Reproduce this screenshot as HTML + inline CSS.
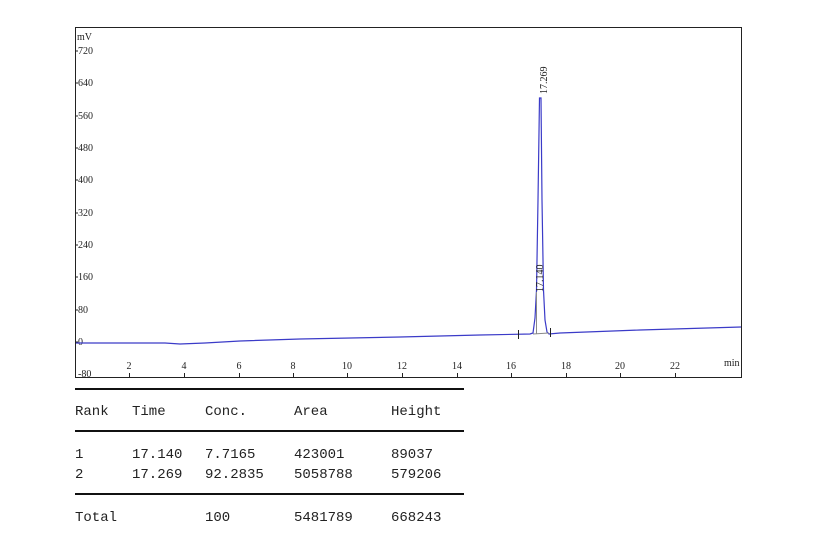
<!DOCTYPE html>
<html><head><meta charset="utf-8"><style>
html,body{margin:0;padding:0;background:#fff;width:823px;height:535px;overflow:hidden}
svg{display:block}
.t{font-family:"Liberation Serif",serif;font-size:10px;fill:#222}
.m{font-family:"Liberation Mono","Noto Sans CJK SC",monospace;font-size:14px;fill:#222}
</style></head><body>
<svg width="823" height="535" xmlns="http://www.w3.org/2000/svg">
<rect x="75.5" y="27.5" width="666" height="350" fill="none" stroke="#222" stroke-width="1"/>
<text class="t" x="77" y="40">mV</text>
<g class="t">
<text x="78" y="54">720</text><text x="78" y="86">640</text><text x="78" y="119">560</text>
<text x="78" y="151">480</text><text x="78" y="183">400</text><text x="78" y="216">320</text>
<text x="78" y="248">240</text><text x="78" y="280">160</text><text x="78" y="313">80</text>
<text x="78" y="345">0</text><text x="78" y="377">-80</text>
</g>
<g stroke="#222" stroke-width="1">
<line x1="75" y1="51" x2="78" y2="51"/><line x1="75" y1="83" x2="78" y2="83"/><line x1="75" y1="116" x2="78" y2="116"/>
<line x1="75" y1="148" x2="78" y2="148"/><line x1="75" y1="180" x2="78" y2="180"/><line x1="75" y1="213" x2="78" y2="213"/>
<line x1="75" y1="245" x2="78" y2="245"/><line x1="75" y1="277" x2="78" y2="277"/><line x1="75" y1="310" x2="78" y2="310"/>
<line x1="75" y1="342" x2="78" y2="342"/>
<line x1="129.5" y1="373" x2="129.5" y2="377"/><line x1="184.5" y1="373" x2="184.5" y2="377"/><line x1="239.5" y1="373" x2="239.5" y2="377"/>
<line x1="293.5" y1="373" x2="293.5" y2="377"/><line x1="347.5" y1="373" x2="347.5" y2="377"/><line x1="402.5" y1="373" x2="402.5" y2="377"/>
<line x1="457.5" y1="373" x2="457.5" y2="377"/><line x1="511.5" y1="373" x2="511.5" y2="377"/><line x1="566.5" y1="373" x2="566.5" y2="377"/>
<line x1="620.5" y1="373" x2="620.5" y2="377"/><line x1="675.5" y1="373" x2="675.5" y2="377"/>
</g>
<g class="t" text-anchor="middle">
<text x="129" y="369">2</text><text x="184" y="369">4</text><text x="239" y="369">6</text><text x="293" y="369">8</text>
<text x="347" y="369">10</text><text x="402" y="369">12</text><text x="457" y="369">14</text><text x="511" y="369">16</text>
<text x="566" y="369">18</text><text x="620" y="369">20</text><text x="675" y="369">22</text>
</g>
<text class="t" x="724" y="366">min</text>
<polyline fill="none" stroke="#3b3bc8" stroke-width="1.2" points="76,343 165,343 180,344 205,343 240,341 300,339 400,337 480,335 530,334 533,333 535,318 536.5,290 538,200 539.5,98 541,98 542,200 543.5,290 545,320 547,332 549,334 560,333 640,330 741,327"/>
<line x1="536.5" y1="292" x2="536.5" y2="334" stroke="#888" stroke-width="1"/>
<line x1="533" y1="334" x2="549" y2="333" stroke="#888" stroke-width="1"/>
<g stroke="#222" stroke-width="1"><line x1="518.5" y1="330" x2="518.5" y2="339"/><line x1="550.5" y1="328" x2="550.5" y2="337"/></g>
<text class="t" transform="translate(547,94) rotate(-90)">17.269</text>
<text class="t" transform="translate(543,292) rotate(-90)">17.140</text>
<g stroke="#111" stroke-width="2">
<line x1="75" y1="389" x2="464" y2="389"/><line x1="75" y1="431" x2="464" y2="431"/><line x1="75" y1="494" x2="464" y2="494"/>
</g>
<g class="m">
<text x="75" y="415">Rank</text><text x="132" y="415">Time</text><text x="205" y="415">Conc.</text><text x="294" y="415">Area</text><text x="391" y="415">Height</text>
<text x="75" y="458">1</text><text x="132" y="458">17.140</text><text x="205" y="458">7.7165</text><text x="294" y="458">423001</text><text x="391" y="458">89037</text>
<text x="75" y="478">2</text><text x="132" y="478">17.269</text><text x="205" y="478">92.2835</text><text x="294" y="478">5058788</text><text x="391" y="478">579206</text>
<text x="75" y="521">Total</text><text x="205" y="521">100</text><text x="294" y="521">5481789</text><text x="391" y="521">668243</text>
</g>
</svg>
</body></html>
